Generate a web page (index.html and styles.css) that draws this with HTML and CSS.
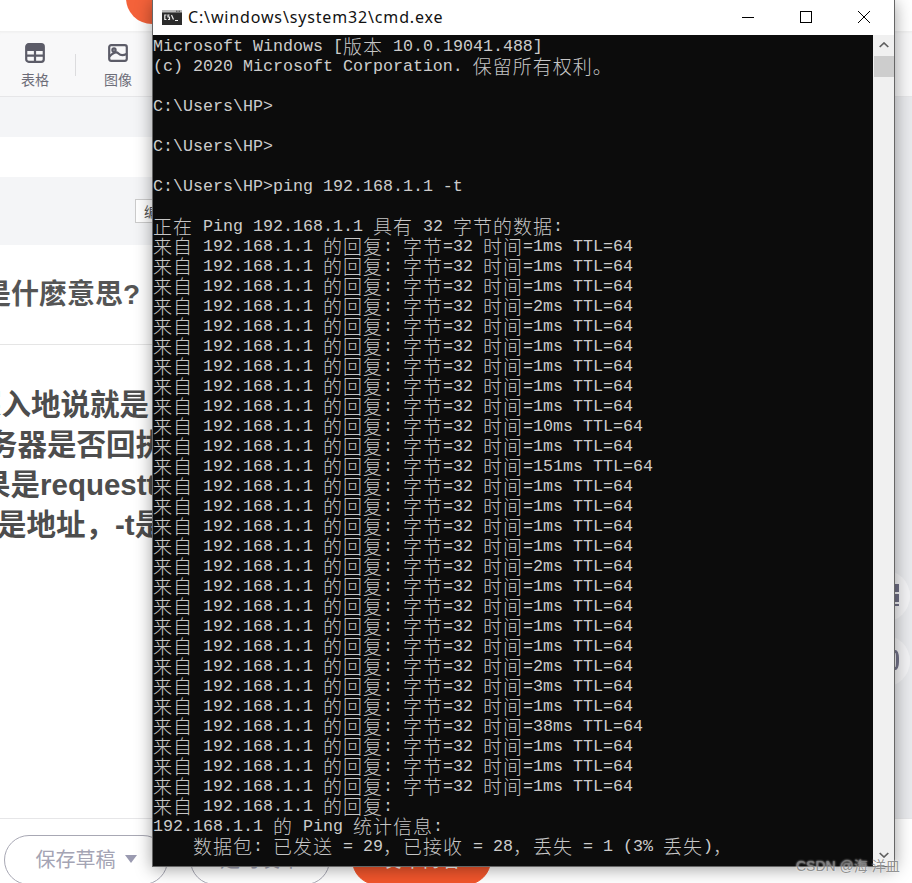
FILE: index.html
```html
<!DOCTYPE html>
<html lang="zh-CN">
<head>
<meta charset="utf-8">
<title>cmd.exe</title>
<link rel="stylesheet" href="styles.css">
</head>
<body>
<div class="page">
  <header class="top"><span class="avatar"></span></header>
  <nav class="toolbar">
    <div class="tool">
      <svg class="tool-icon" viewBox="0 0 20 20"><rect x="1.200" y="1.200" width="17.600" height="17.600" rx="2.500" class="ic-line"/><path d="M1.500 7h17M1.500 12.700h17M10 7v11" class="ic-line"/><path d="M2 2h16v4H2z" class="ic-fill"/></svg>
      <span>表格</span>
    </div>
    <span class="tool-sep"></span>
    <div class="tool">
      <svg class="tool-icon" viewBox="0 0 20 20"><rect x="1.200" y="2.200" width="17.600" height="15.600" rx="2" class="ic-line"/><circle cx="6" cy="7" r="1.600" class="ic-line"/><path d="M1.500 13.500c4-4 7-5 9-3s4 2.500 8 .5" class="ic-line"/></svg>
      <span>图像</span>
    </div>
  </nav>
  <div class="body">
    <main class="article">
      <div class="band band-a"></div>
      <div class="blank"></div>
      <div class="band band-b"><span class="select">编辑器</span></div>
      <h1 class="title">是什麽意思?</h1>
      <div class="para">
        <p class="ln ln1">深入地说就是，</p>
        <p class="ln ln2">务器是否回执</p>
        <p class="ln ln3">果是requestt</p>
        <p class="ln ln4">是地址，-t是</p>
      </div>
    </main>
    <aside class="gutter"></aside>
  </div>
  <footer class="footer">
    <button class="btn btn-draft">保存草稿<i class="caret"></i></button>
    <button class="btn btn-plain">定时发布</button>
    <button class="btn btn-main">发布博客</button>
  </footer>
</div>

<div class="float f1"><i class="f1-mark"></i></div>
<div class="float f2"><i class="f2-mark"></i></div>

<section class="win">
  <div class="titlebar">
    <svg class="cmd-icon" viewBox="0 0 20 15"><rect width="20" height="15" fill="#2b2b2b"/><rect y="0" width="20" height="2.500" fill="#b9b9b9"/><rect x="14" y="0.700" width="1.500" height="1" fill="#444"/><rect x="16.500" y="0.700" width="1.500" height="1" fill="#444"/><path d="M4.500 5H2.800v4.500h1.700M7.500 5H6v2h1.500v2.500H6M9.500 5l2 4.500M13 10.500h3" stroke="#eee" stroke-width="1.200" fill="none"/></svg>
    <span class="win-title">C:\windows\system32\cmd.exe</span>
    <div class="win-btns">
      <svg class="wb" viewBox="0 0 14 14"><path d="M1 7.500h12" stroke="#000" stroke-width="1"/></svg>
      <svg class="wb" viewBox="0 0 14 14"><rect x="1.500" y="1.500" width="11" height="11" fill="none" stroke="#000" stroke-width="1"/></svg>
      <svg class="wb" viewBox="0 0 14 14"><path d="M1 1l12 12M13 1L1 13" stroke="#000" stroke-width="1"/></svg>
    </div>
  </div>
  <div class="console">
    <div class="term">
      <div class="l">Microsoft Windows [<b>版本</b> 10.0.19041.488]</div>
      <div class="l">(c) 2020 Microsoft Corporation. <b>保留所有权利。</b></div>
      <div class="l"></div>
      <div class="l">C:\Users\HP&gt;</div>
      <div class="l"></div>
      <div class="l">C:\Users\HP&gt;</div>
      <div class="l"></div>
      <div class="l">C:\Users\HP&gt;ping 192.168.1.1 -t</div>
      <div class="l"></div>
      <div class="l"><b>正在</b> Ping 192.168.1.1 <b>具有</b> 32 <b>字节的数据</b>:</div>
      <div class="l"><b>来自</b> 192.168.1.1 <b>的回复</b>: <b>字节</b>=32 <b>时间</b>=1ms TTL=64</div>
      <div class="l"><b>来自</b> 192.168.1.1 <b>的回复</b>: <b>字节</b>=32 <b>时间</b>=1ms TTL=64</div>
      <div class="l"><b>来自</b> 192.168.1.1 <b>的回复</b>: <b>字节</b>=32 <b>时间</b>=1ms TTL=64</div>
      <div class="l"><b>来自</b> 192.168.1.1 <b>的回复</b>: <b>字节</b>=32 <b>时间</b>=2ms TTL=64</div>
      <div class="l"><b>来自</b> 192.168.1.1 <b>的回复</b>: <b>字节</b>=32 <b>时间</b>=1ms TTL=64</div>
      <div class="l"><b>来自</b> 192.168.1.1 <b>的回复</b>: <b>字节</b>=32 <b>时间</b>=1ms TTL=64</div>
      <div class="l"><b>来自</b> 192.168.1.1 <b>的回复</b>: <b>字节</b>=32 <b>时间</b>=1ms TTL=64</div>
      <div class="l"><b>来自</b> 192.168.1.1 <b>的回复</b>: <b>字节</b>=32 <b>时间</b>=1ms TTL=64</div>
      <div class="l"><b>来自</b> 192.168.1.1 <b>的回复</b>: <b>字节</b>=32 <b>时间</b>=1ms TTL=64</div>
      <div class="l"><b>来自</b> 192.168.1.1 <b>的回复</b>: <b>字节</b>=32 <b>时间</b>=10ms TTL=64</div>
      <div class="l"><b>来自</b> 192.168.1.1 <b>的回复</b>: <b>字节</b>=32 <b>时间</b>=1ms TTL=64</div>
      <div class="l"><b>来自</b> 192.168.1.1 <b>的回复</b>: <b>字节</b>=32 <b>时间</b>=151ms TTL=64</div>
      <div class="l"><b>来自</b> 192.168.1.1 <b>的回复</b>: <b>字节</b>=32 <b>时间</b>=1ms TTL=64</div>
      <div class="l"><b>来自</b> 192.168.1.1 <b>的回复</b>: <b>字节</b>=32 <b>时间</b>=1ms TTL=64</div>
      <div class="l"><b>来自</b> 192.168.1.1 <b>的回复</b>: <b>字节</b>=32 <b>时间</b>=1ms TTL=64</div>
      <div class="l"><b>来自</b> 192.168.1.1 <b>的回复</b>: <b>字节</b>=32 <b>时间</b>=1ms TTL=64</div>
      <div class="l"><b>来自</b> 192.168.1.1 <b>的回复</b>: <b>字节</b>=32 <b>时间</b>=2ms TTL=64</div>
      <div class="l"><b>来自</b> 192.168.1.1 <b>的回复</b>: <b>字节</b>=32 <b>时间</b>=1ms TTL=64</div>
      <div class="l"><b>来自</b> 192.168.1.1 <b>的回复</b>: <b>字节</b>=32 <b>时间</b>=1ms TTL=64</div>
      <div class="l"><b>来自</b> 192.168.1.1 <b>的回复</b>: <b>字节</b>=32 <b>时间</b>=1ms TTL=64</div>
      <div class="l"><b>来自</b> 192.168.1.1 <b>的回复</b>: <b>字节</b>=32 <b>时间</b>=1ms TTL=64</div>
      <div class="l"><b>来自</b> 192.168.1.1 <b>的回复</b>: <b>字节</b>=32 <b>时间</b>=2ms TTL=64</div>
      <div class="l"><b>来自</b> 192.168.1.1 <b>的回复</b>: <b>字节</b>=32 <b>时间</b>=3ms TTL=64</div>
      <div class="l"><b>来自</b> 192.168.1.1 <b>的回复</b>: <b>字节</b>=32 <b>时间</b>=1ms TTL=64</div>
      <div class="l"><b>来自</b> 192.168.1.1 <b>的回复</b>: <b>字节</b>=32 <b>时间</b>=38ms TTL=64</div>
      <div class="l"><b>来自</b> 192.168.1.1 <b>的回复</b>: <b>字节</b>=32 <b>时间</b>=1ms TTL=64</div>
      <div class="l"><b>来自</b> 192.168.1.1 <b>的回复</b>: <b>字节</b>=32 <b>时间</b>=1ms TTL=64</div>
      <div class="l"><b>来自</b> 192.168.1.1 <b>的回复</b>: <b>字节</b>=32 <b>时间</b>=1ms TTL=64</div>
      <div class="l"><b>来自</b> 192.168.1.1 <b>的回复</b>:</div>
      <div class="l">192.168.1.1 <b>的</b> Ping <b>统计信息</b>:</div>
      <div class="l">    <b>数据包</b>: <b>已发送</b> = 29<b>，已接收</b> = 28<b>，丢失</b> = 1 (3% <b>丢失</b>)<b>，</b></div>
    </div>
    <div class="scroll">
      <svg class="arrow" viewBox="0 0 10 6"><path d="M.7 5L5 1l4.300 4" fill="none" stroke="#606060" stroke-width="1.700"/></svg>
      <div class="thumb"></div>
      <svg class="arrow arrow-down" viewBox="0 0 10 6"><path d="M.7 1L5 5l4.300-4" fill="none" stroke="#606060" stroke-width="1.700"/></svg>
    </div>
  </div>
</section>

<div class="watermark">CSDN @海 洋皿</div>
</body>
</html>
```
FILE: styles.css
```css
* { box-sizing: border-box; }
html, body { margin: 0; height: 883px; overflow: hidden; background: #fff; }
body { position: relative; font-family: "Liberation Sans", "Noto Sans CJK SC", sans-serif; }

.page { display: flex; flex-direction: column; height: 883px; }

.top { height: 31px; background: #fff; position: relative; flex: none; }
.avatar { position: absolute; left: 126px; top: -28px; width: 52px; height: 52px; border-radius: 50%; background: #f4623a; }

.toolbar { height: 66px; flex: none; background: #f8f8f9; border-bottom: 1px solid #e6e6e8; box-shadow: inset 0 3px 3px -2px #ececec; display: flex; align-items: flex-start; padding: 12px 0 0 15px; }
.tool { width: 40px; display: flex; flex-direction: column; align-items: center; color: #6d6d78; font-size: 14px; line-height: 20px; gap: 6px; }
.tool span { font-family: "Noto Sans CJK SC", sans-serif; white-space: nowrap; }
.tool-icon { width: 20px; height: 20px; display: block; }
.ic-line { fill: none; stroke: #5c5c68; stroke-width: 2.200; }
.ic-fill { fill: #5c5c68; }
.tool-sep { width: 1px; height: 22px; background: #dcdcde; margin: 11px 22px 0 20px; }

.body { flex: 1; display: flex; min-height: 0; }
.article { flex: 1; min-width: 0; background: #fff; overflow: hidden; }
.gutter { width: 36px; flex: none; background: #e9eaed; }

.band { background: #f4f5f7; }
.band-a { height: 40px; }
.blank { height: 40px; }
.band-b { height: 68px; padding: 22px 0 0 135px; }
.select { display: block; width: 120px; height: 24px; background: #fff; border: 1px solid #ccc; font-size: 14px; line-height: 22px; color: #555; padding-left: 8px; font-family: "Noto Sans CJK SC", sans-serif; }

.title { margin: 0 0 0 -17px; height: 100px; border-bottom: 1px solid #e5e5e5; font-size: 28px; font-weight: 700; line-height: 100px; color: #555; white-space: nowrap; }
.para { padding-top: 40px; color: #4d4d4d; font-size: 29.500px; font-weight: 700; line-height: 40px; }
.ln { margin: 0; height: 40px; white-space: pre; }
.ln1 { margin-left: -28px; }
.ln2 { margin-left: -12px; }
.ln3 { margin-left: -19px; }
.ln4 { margin-left: -3px; }

.footer { height: 65px; flex: none; background: #fff; border-top: 1px solid #e6e6e8; display: flex; gap: 22px; padding: 16px 0 0 4px; overflow: hidden; }
.btn { height: 50px; flex: none; border-radius: 25px; background: #fff; border: 1px solid #a8a8b4; font: 20px/48px "Noto Sans CJK SC", sans-serif; color: #a4a4b4; padding: 0 0 2px; display: flex; align-items: center; justify-content: center; }
.btn-draft { width: 164px; gap: 9px; }
.btn-plain { width: 140px; }
.btn-main { width: 139px; background: #f2562c; border-color: #f2562c; color: #fff; }
.caret { width: 0; height: 0; border-left: 6.500px solid transparent; border-right: 6.500px solid transparent; border-top: 8px solid #9a9ab0; }

.float { position: absolute; width: 52px; height: 52px; border-radius: 50%; background: #f3f3f5; left: 858px; }
.f1 { top: 570px; }
.f2 { top: 635px; }
.f1-mark { position: absolute; left: 37px; top: 14px; width: 4px; height: 22px; background: repeating-linear-gradient(#6f6f85 0 8px, transparent 8px 10px); }
.f2-mark { position: absolute; left: 32px; top: 15px; width: 9px; height: 20px; border: 3px solid #74748a; border-radius: 40%; }

.win { position: absolute; left: 152px; top: 0; width: 743px; height: 867px; background: #fff; border: 1px solid #666; border-top: 0; box-shadow: 0 2px 16px rgba(0, 0, 0, .38); display: flex; flex-direction: column; }
.titlebar { height: 35px; flex: none; display: flex; align-items: center; padding: 0 0 2px 9px; background: #fff; }
.cmd-icon { width: 20px; height: 15px; flex: none; margin-top: 1px; }
.win-title { margin-left: 6px; font: 16px/20px "Noto Sans", sans-serif; letter-spacing: .85px; color: #111; white-space: nowrap; }
.win-btns { margin-left: auto; display: flex; gap: 44px; padding-right: 23px; }
.wb { width: 14px; height: 14px; display: block; }

.console { flex: 1; min-height: 0; display: flex; }
.term { flex: 1; min-width: 0; background: #0c0c0c; color: #cccccc; font: 16.667px/20px "Liberation Mono", monospace; padding-top: 2px; overflow: hidden; }
.l { height: 20px; white-space: pre; }
.l b { font: 300 19px/18px "Noto Sans CJK SC", sans-serif; letter-spacing: 1px; vertical-align: top; color: #c6c6c6; }

.scroll { width: 21px; flex: none; background: #f0f0f0; display: flex; flex-direction: column; align-items: center; padding-left: 1px; }
.arrow { width: 10px; height: 6px; margin-top: 7px; flex: none; display: block; }
.thumb { width: 20px; height: 21px; background: #cdcdcd; margin-top: 8px; flex: none; }
.arrow-down { margin-top: auto; margin-bottom: 8px; }

.watermark { position: absolute; left: 796px; top: 857px; font: 14px/18px "Liberation Sans", "Noto Sans CJK SC", sans-serif; color: rgba(120, 120, 120, .8); text-shadow: 0 0 2px #fff; white-space: nowrap; }
```
